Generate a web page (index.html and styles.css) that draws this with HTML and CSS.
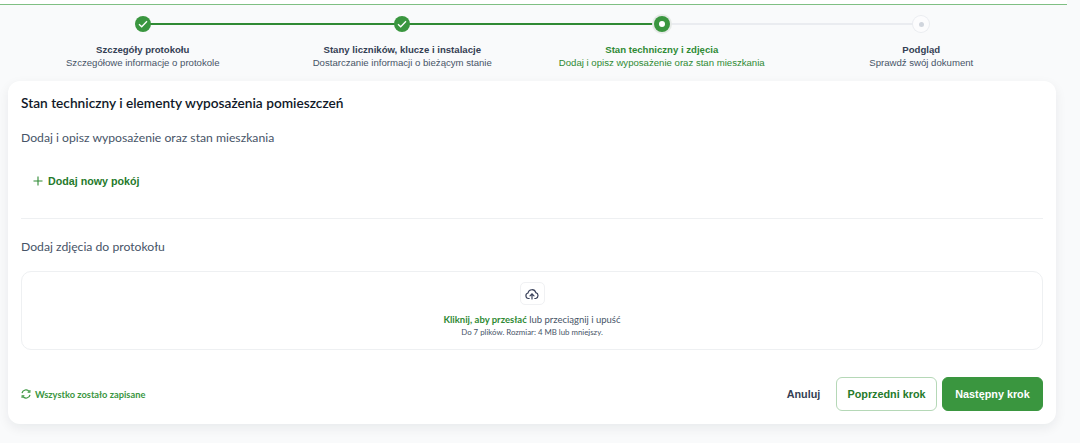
FILE: index.html
```html
<!DOCTYPE html>
<html lang="pl">
<head>
<meta charset="utf-8">
<title>Stan techniczny i zdjęcia</title>
<link rel="stylesheet" href="styles.css">
</head>
<body>
<div class="topline"></div>
<ol class="stepper">
  <li class="step done">
    <span class="track"><span class="dot"><svg width="10" height="8" viewBox="0 0 10 8"><path d="M1 4.2 3.7 6.8 9 1.2" fill="none" stroke="#fff" stroke-width="1.3"/></svg></span></span>
    <strong>Szczegóły protokołu</strong>
    <span class="sub">Szczegółowe informacje o protokole</span>
  </li>
  <li class="step done">
    <span class="track"><span class="dot"><svg width="10" height="8" viewBox="0 0 10 8"><path d="M1 4.2 3.7 6.8 9 1.2" fill="none" stroke="#fff" stroke-width="1.3"/></svg></span></span>
    <strong>Stany liczników, klucze i instalacje</strong>
    <span class="sub">Dostarczanie informacji o bieżącym stanie</span>
  </li>
  <li class="step current">
    <span class="track"><span class="dot"><i></i></span></span>
    <strong>Stan techniczny i zdjęcia</strong>
    <span class="sub">Dodaj i opisz wyposażenie oraz stan mieszkania</span>
  </li>
  <li class="step todo">
    <span class="track"><span class="dot"><i></i></span></span>
    <strong>Podgląd</strong>
    <span class="sub">Sprawdź swój dokument</span>
  </li>
</ol>
<main class="card">
  <h1>Stan techniczny i elementy wyposażenia pomieszczeń</h1>
  <p class="label first">Dodaj i opisz wyposażenie oraz stan mieszkania</p>
  <button class="add" type="button"><svg width="10" height="10" viewBox="0 0 10 10"><path d="M5 .5v9M.5 5h9" stroke="#2f8a34" stroke-width="1.1" fill="none"/></svg>Dodaj nowy pokój</button>
  <hr class="divider">
  <p class="label">Dodaj zdjęcia do protokołu</p>
  <div class="dropzone">
    <span class="upload-icon"><svg width="14" height="12" viewBox="0 0 14 12"><path d="M4.2 10.5H3.5A2.8 2.8 0 0 1 3 5a4 4 0 0 1 7.8-.3 3 3 0 0 1 0 5.8h-1" fill="none" stroke="#39415a" stroke-width="1.2" stroke-linecap="round"/><path d="M7 11V6M5 7.8l2-2 2 2" fill="none" stroke="#39415a" stroke-width="1.2" stroke-linecap="round"/></svg></span>
    <p class="drop-main"><b>Kliknij, aby przesłać</b> lub przeciągnij i upuść</p>
    <p class="drop-hint">Do 7 plików. Rozmiar: 4 MB lub mniejszy.</p>
  </div>
  <footer class="actions">
    <span class="saved"><svg width="10" height="10" viewBox="0 0 10 10"><path d="M1 4.2A4 4 0 0 1 8.2 2.6M9 5.8A4 4 0 0 1 1.8 7.4" fill="none" stroke="#3a963f" stroke-width="1.2"/><path d="M8.9.9v2.3H6.6M1.1 9.1V6.8h2.3" fill="none" stroke="#3a963f" stroke-width="1.1"/></svg>Wszystko zostało zapisane</span>
    <button class="btn cancel" type="button">Anuluj</button>
    <button class="btn prev" type="button">Poprzedni krok</button>
    <button class="btn next" type="button">Następny krok</button>
  </footer>
</main>
</body>
</html>
```
FILE: styles.css
```css
* { box-sizing: border-box; }
html, body { margin: 0; padding: 0; }
body {
  width: 1080px;
  height: 443px;
  overflow: hidden;
  background: #f9fafb;
  font-family: "Lato", "Liberation Sans", sans-serif;
  color: #344054;
}
.topline {
  height: 5px;
  width: 1067px;
  background: #fff;
  border-bottom: 1px solid #7fbf83;
}
.stepper {
  list-style: none;
  margin: 0;
  padding: 0 29px 0 13px;
  display: grid;
  grid-template-columns: repeat(4, 1fr);
  height: 76px;
}
.step {
  display: flex;
  flex-direction: column;
  align-items: center;
  padding-top: 10px;
  font-family: "Liberation Sans", sans-serif;
  font-size: 9.6px;
  line-height: 13px;
  color: #475467;
  white-space: nowrap;
}
.step strong { color: #344054; font-weight: 700; margin-top: 10px; }
.track {
  position: relative;
  align-self: stretch;
  height: 18px;
  display: flex;
  justify-content: center;
  align-items: center;
}
.track::after {
  content: "";
  position: absolute;
  left: 50%;
  width: 100%;
  top: 8px;
  height: 2px;
  background: #eaecf0;
}
.step:last-child .track::after { display: none; }
.done .track::after { background: #2f8a34; }
.dot {
  position: relative;
  z-index: 1;
  width: 16px;
  height: 16px;
  border-radius: 50%;
  display: flex;
  align-items: center;
  justify-content: center;
}
.done .dot { background: #3a963f; }
.current .dot { background: #3a963f; box-shadow: 0 0 0 2px #e6eae7; }
.current .dot i { width: 6px; height: 6px; border-radius: 50%; background: #fff; }
.todo .dot { background: #fcfcfd; box-shadow: 0 0 0 1px #eaecf0; }
.todo .dot i { width: 5px; height: 5px; border-radius: 50%; background: #d0d5dd; }
.current strong, .current .sub { color: #2f8a34; }
.card {
  width: 1048px;
  height: 343px;
  margin-left: 8px;
  padding: 13px 13px 0;
  background: #fff;
  border-radius: 12px;
  box-shadow: 0 4px 12px rgba(16, 24, 40, .07);
}
h1 {
  margin: 0;
  font-size: 13.7px;
  line-height: 18px;
  font-weight: 600;
  color: #101828;
}
.label {
  margin: 0;
  font-size: 12.2px;
  line-height: 16px;
  color: #475467;
}
.label.first { margin-top: 18px; }
.add {
  display: flex;
  align-items: center;
  gap: 5px;
  margin: 27px 0 0 12px;
  padding: 0;
  height: 16px;
  border: 0;
  background: none;
  font: 700 10.7px "Liberation Sans", sans-serif;
  color: #257a2b;
}
.divider {
  margin: 29px 0 0;
  border: 0;
  border-top: 1px solid #eef0f2;
}
.divider + .label { margin-top: 20px; }
.dropzone {
  margin-top: 16px;
  height: 79px;
  border: 1px solid #eef0f2;
  border-radius: 10px;
  display: flex;
  flex-direction: column;
  align-items: center;
  padding-top: 10px;
}
.upload-icon {
  width: 25px;
  height: 23px;
  border: 1px solid #f0f1f3;
  border-radius: 5px;
  display: flex;
  align-items: center;
  justify-content: center;
}
.drop-main { margin: 9px 0 0; font-size: 9.5px; line-height: 12px; color: #475467; }
.drop-main b { color: #2f8a34; font-weight: 700; }
.drop-hint { margin: 1px 0 0; font-size: 7.85px; line-height: 10px; color: #475467; }
.actions {
  display: flex;
  align-items: center;
  gap: 5px;
  margin-top: 27px;
}
.saved {
  display: flex;
  align-items: center;
  gap: 4px;
  margin-right: auto;
  font-size: 9.3px;
  font-weight: 700;
  color: #3a963f;
}
.btn {
  height: 34px;
  border-radius: 6px;
  font: 700 10.8px "Liberation Sans", sans-serif;
  padding: 0;
}
.cancel { width: 55px; border: 0; background: none; color: #344054; }
.prev { width: 101px; background: #fff; border: 1px solid #b5d8b7; color: #257a2b; }
.next { width: 101px; background: #3a963f; border: 1px solid #3a963f; color: #fff; }
```
